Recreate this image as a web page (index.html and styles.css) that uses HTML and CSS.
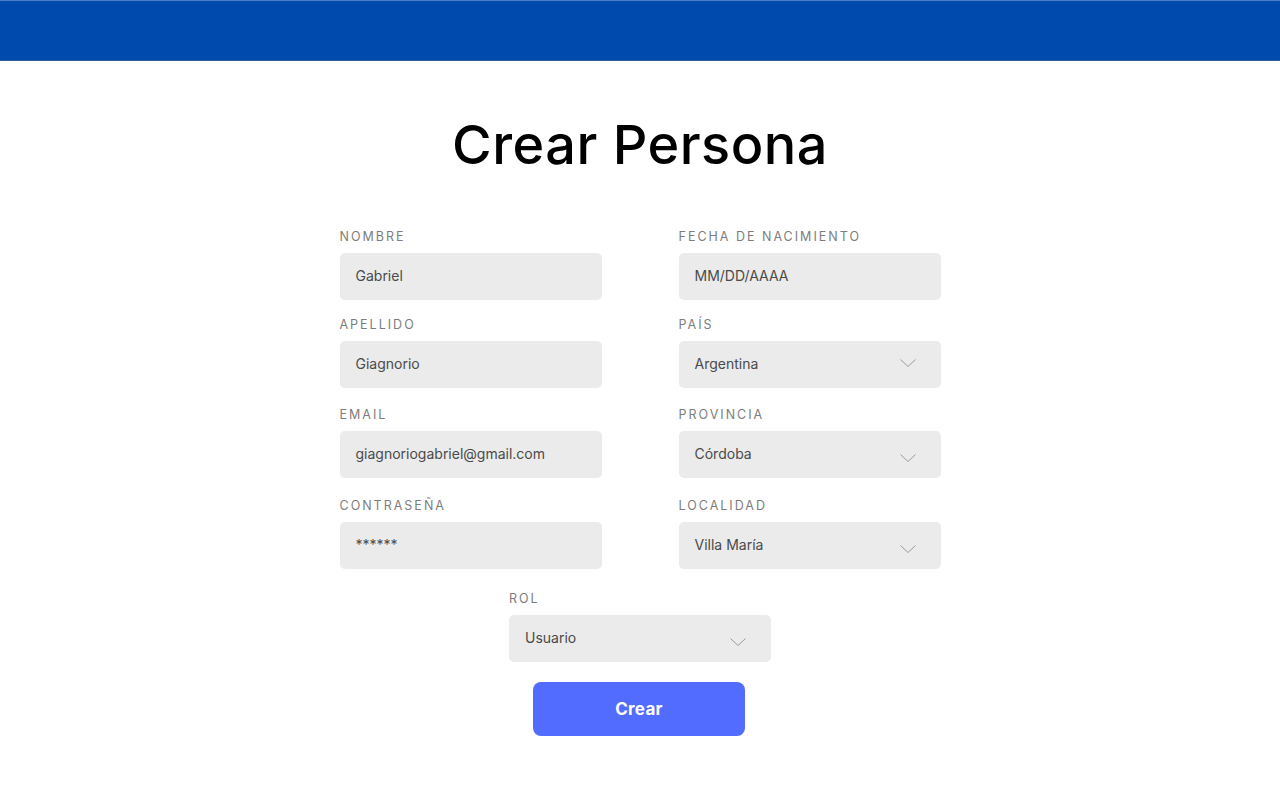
FILE: index.html
```html
<!DOCTYPE html>
<html lang="es">
<head>
<meta charset="utf-8">
<title>Crear Persona</title>
<link rel="stylesheet" href="styles.css">
</head>
<body>
<header class="topbar"></header>
<main class="page">
  <h1 class="title">Crear Persona</h1>
  <form class="form">
    <div class="grid">
      <div class="field">
        <label class="label">NOMBRE</label>
        <div class="input">Gabriel</div>
      </div>
      <div class="field">
        <label class="label">FECHA DE NACIMIENTO</label>
        <div class="input">MM/DD/AAAA</div>
      </div>
      <div class="field">
        <label class="label">APELLIDO</label>
        <div class="input">Giagnorio</div>
      </div>
      <div class="field">
        <label class="label">PAÍS</label>
        <div class="input select">
          <span>Argentina</span>
          <svg class="chev" width="16" height="9" viewBox="0 0 16 9"><polyline points="0.5,0.5 8,7.5 15.5,0.5" fill="none" stroke="#9a9a9a" stroke-width="1"/></svg>
        </div>
      </div>
      <div class="field row3">
        <label class="label">EMAIL</label>
        <div class="input">giagnoriogabriel@gmail.com</div>
      </div>
      <div class="field row3">
        <label class="label">PROVINCIA</label>
        <div class="input select low">
          <span>Córdoba</span>
          <svg class="chev" width="16" height="9" viewBox="0 0 16 9"><polyline points="0.5,0.5 8,7.5 15.5,0.5" fill="none" stroke="#9a9a9a" stroke-width="1"/></svg>
        </div>
      </div>
      <div class="field row4">
        <label class="label">CONTRASEÑA</label>
        <div class="input">******</div>
      </div>
      <div class="field row4">
        <label class="label">LOCALIDAD</label>
        <div class="input select low">
          <span>Villa María</span>
          <svg class="chev" width="16" height="9" viewBox="0 0 16 9"><polyline points="0.5,0.5 8,7.5 15.5,0.5" fill="none" stroke="#9a9a9a" stroke-width="1"/></svg>
        </div>
      </div>
    </div>
    <div class="field role">
      <label class="label">ROL</label>
      <div class="input select low">
        <span>Usuario</span>
        <svg class="chev" width="16" height="9" viewBox="0 0 16 9"><polyline points="0.5,0.5 8,7.5 15.5,0.5" fill="none" stroke="#9a9a9a" stroke-width="1"/></svg>
      </div>
    </div>
    <button type="button" class="btn">Crear</button>
  </form>
</main>
</body>
</html>
```
FILE: styles.css
```css
* { box-sizing: border-box; }
html, body { margin: 0; padding: 0; background: #ffffff; }
body { font-family: "Inter", "Noto Sans", sans-serif; color: #000; }

.topbar {
  height: 61px;
  background: #004aad;
  border-top: 1px solid #4a7fc4;
  border-bottom: 1px solid #2f5f9e;
}

.page {
  display: flex;
  flex-direction: column;
  align-items: center;
}

.title {
  margin: 57px 0 0;
  font-size: 54px;
  line-height: 54px;
  font-weight: 500;
  letter-spacing: 0.5px;
  color: #000;
}

.form {
  margin-top: 57px;
  display: flex;
  flex-direction: column;
  align-items: center;
}

.grid {
  display: grid;
  grid-template-columns: 262px 262px;
  column-gap: 77px;
  row-gap: 17px;
}

.row3 { margin-top: 2px; }
.row4 { margin-top: 3px; }

.field {
  display: flex;
  flex-direction: column;
  gap: 8px;
}

.label {
  display: block;
  height: 16px;
  line-height: 16px;
  font-size: 12.5px;
  letter-spacing: 2px;
  color: #7d7d7d;
  font-weight: 400;
}

.input {
  height: 47px;
  border-radius: 5px;
  background: #ebebeb;
  padding: 0 16px;
  display: flex;
  align-items: center;
  font-size: 14px;
  color: #4a4a4a;
  padding-bottom: 2px;
}

.select {
  justify-content: space-between;
  padding-right: 25px;
}

.select.low .chev { margin-top: 10px; }

.role {
  margin-top: 22px;
  width: 262px;
}

.btn {
  margin-top: 20px;
  margin-right: 2px;
  width: 212px;
  height: 54px;
  border: none;
  border-radius: 8px;
  background: #516cff;
  color: #ffffff;
  font-family: "Inter", "Noto Sans", sans-serif;
  font-weight: 700;
  font-size: 17px;
  letter-spacing: 0.3px;
  cursor: pointer;
}
```
